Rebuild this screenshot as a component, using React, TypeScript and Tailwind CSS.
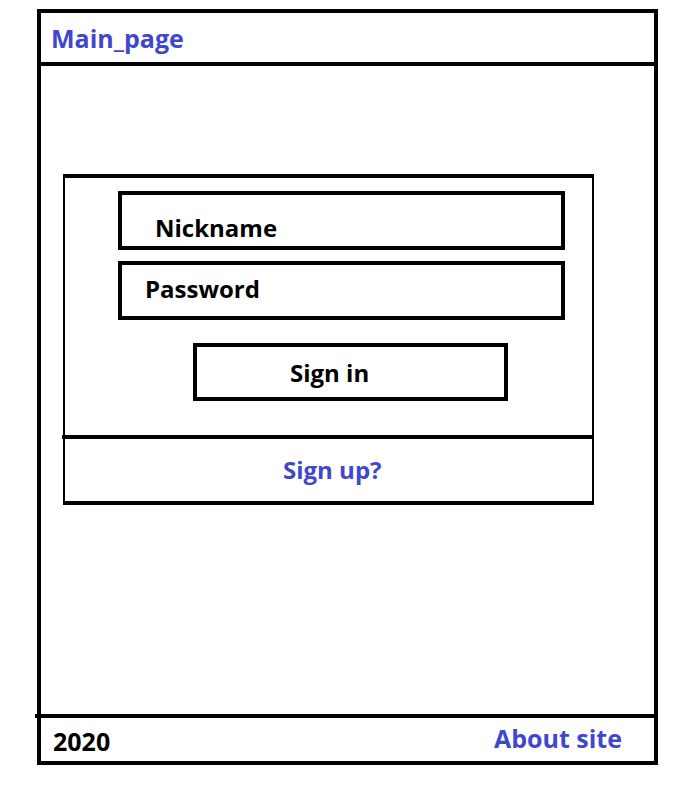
export default function App() {
  return (
    <div className="w-[685px] h-[789px] bg-white pt-[9px] pl-[37px] font-['Open_Sans',sans-serif] font-bold text-black">
      <div className="relative w-[621px] h-[756px] border-4 border-black flex flex-col">
        <header className="h-[53px] shrink-0 border-b-4 border-black flex items-center pl-[10px]">
          <span className="text-[25px] leading-[32px] text-[#3f48cc]">Main_page</span>
        </header>
        <main className="flex-1 pt-[108px] pl-[22px]">
          <div className="relative w-[531px] border-t-4 border-b-4 border-x-2 border-black flex flex-col">
            <div className="h-[257px] pt-[13px] pl-[53px] flex flex-col items-start">
              <div className="w-[447px] h-[59px] border-4 border-black pl-[33px] pt-[17px] text-[24px] leading-[32px]">
                Nickname
              </div>
              <div className="mt-[11px] w-[447px] h-[59px] border-4 border-black pl-[23px] pt-[8px] text-[24px] leading-[32px]">
                Password
              </div>
              <div className="mt-[23px] ml-[75px] w-[315px] h-[58px] border-4 border-black pl-[93px] pt-[10px] text-[24px] leading-[32px]">
                Sign in
              </div>
            </div>
            <div className="h-[66px] border-t-4 border-black pl-[218px] pt-[15px] text-[24px] leading-[32px] text-[#3f48cc]">
              Sign up?
            </div>
            <span className="absolute left-[-3px] top-[257px] w-[2px] h-[4px] bg-black" />
          </div>
        </main>
        <footer className="h-[47px] shrink-0 border-t-4 border-black flex justify-between items-start pl-[12px] pr-[32px] text-[25px] leading-[32px]">
          <span className="mt-[7px]">2020</span>
          <span className="mt-[4px] text-[#3f48cc]">About site</span>
        </footer>
        <span className="absolute left-[-6px] bottom-[43px] w-[2px] h-[4px] bg-black" />
      </div>
    </div>
  );
}
